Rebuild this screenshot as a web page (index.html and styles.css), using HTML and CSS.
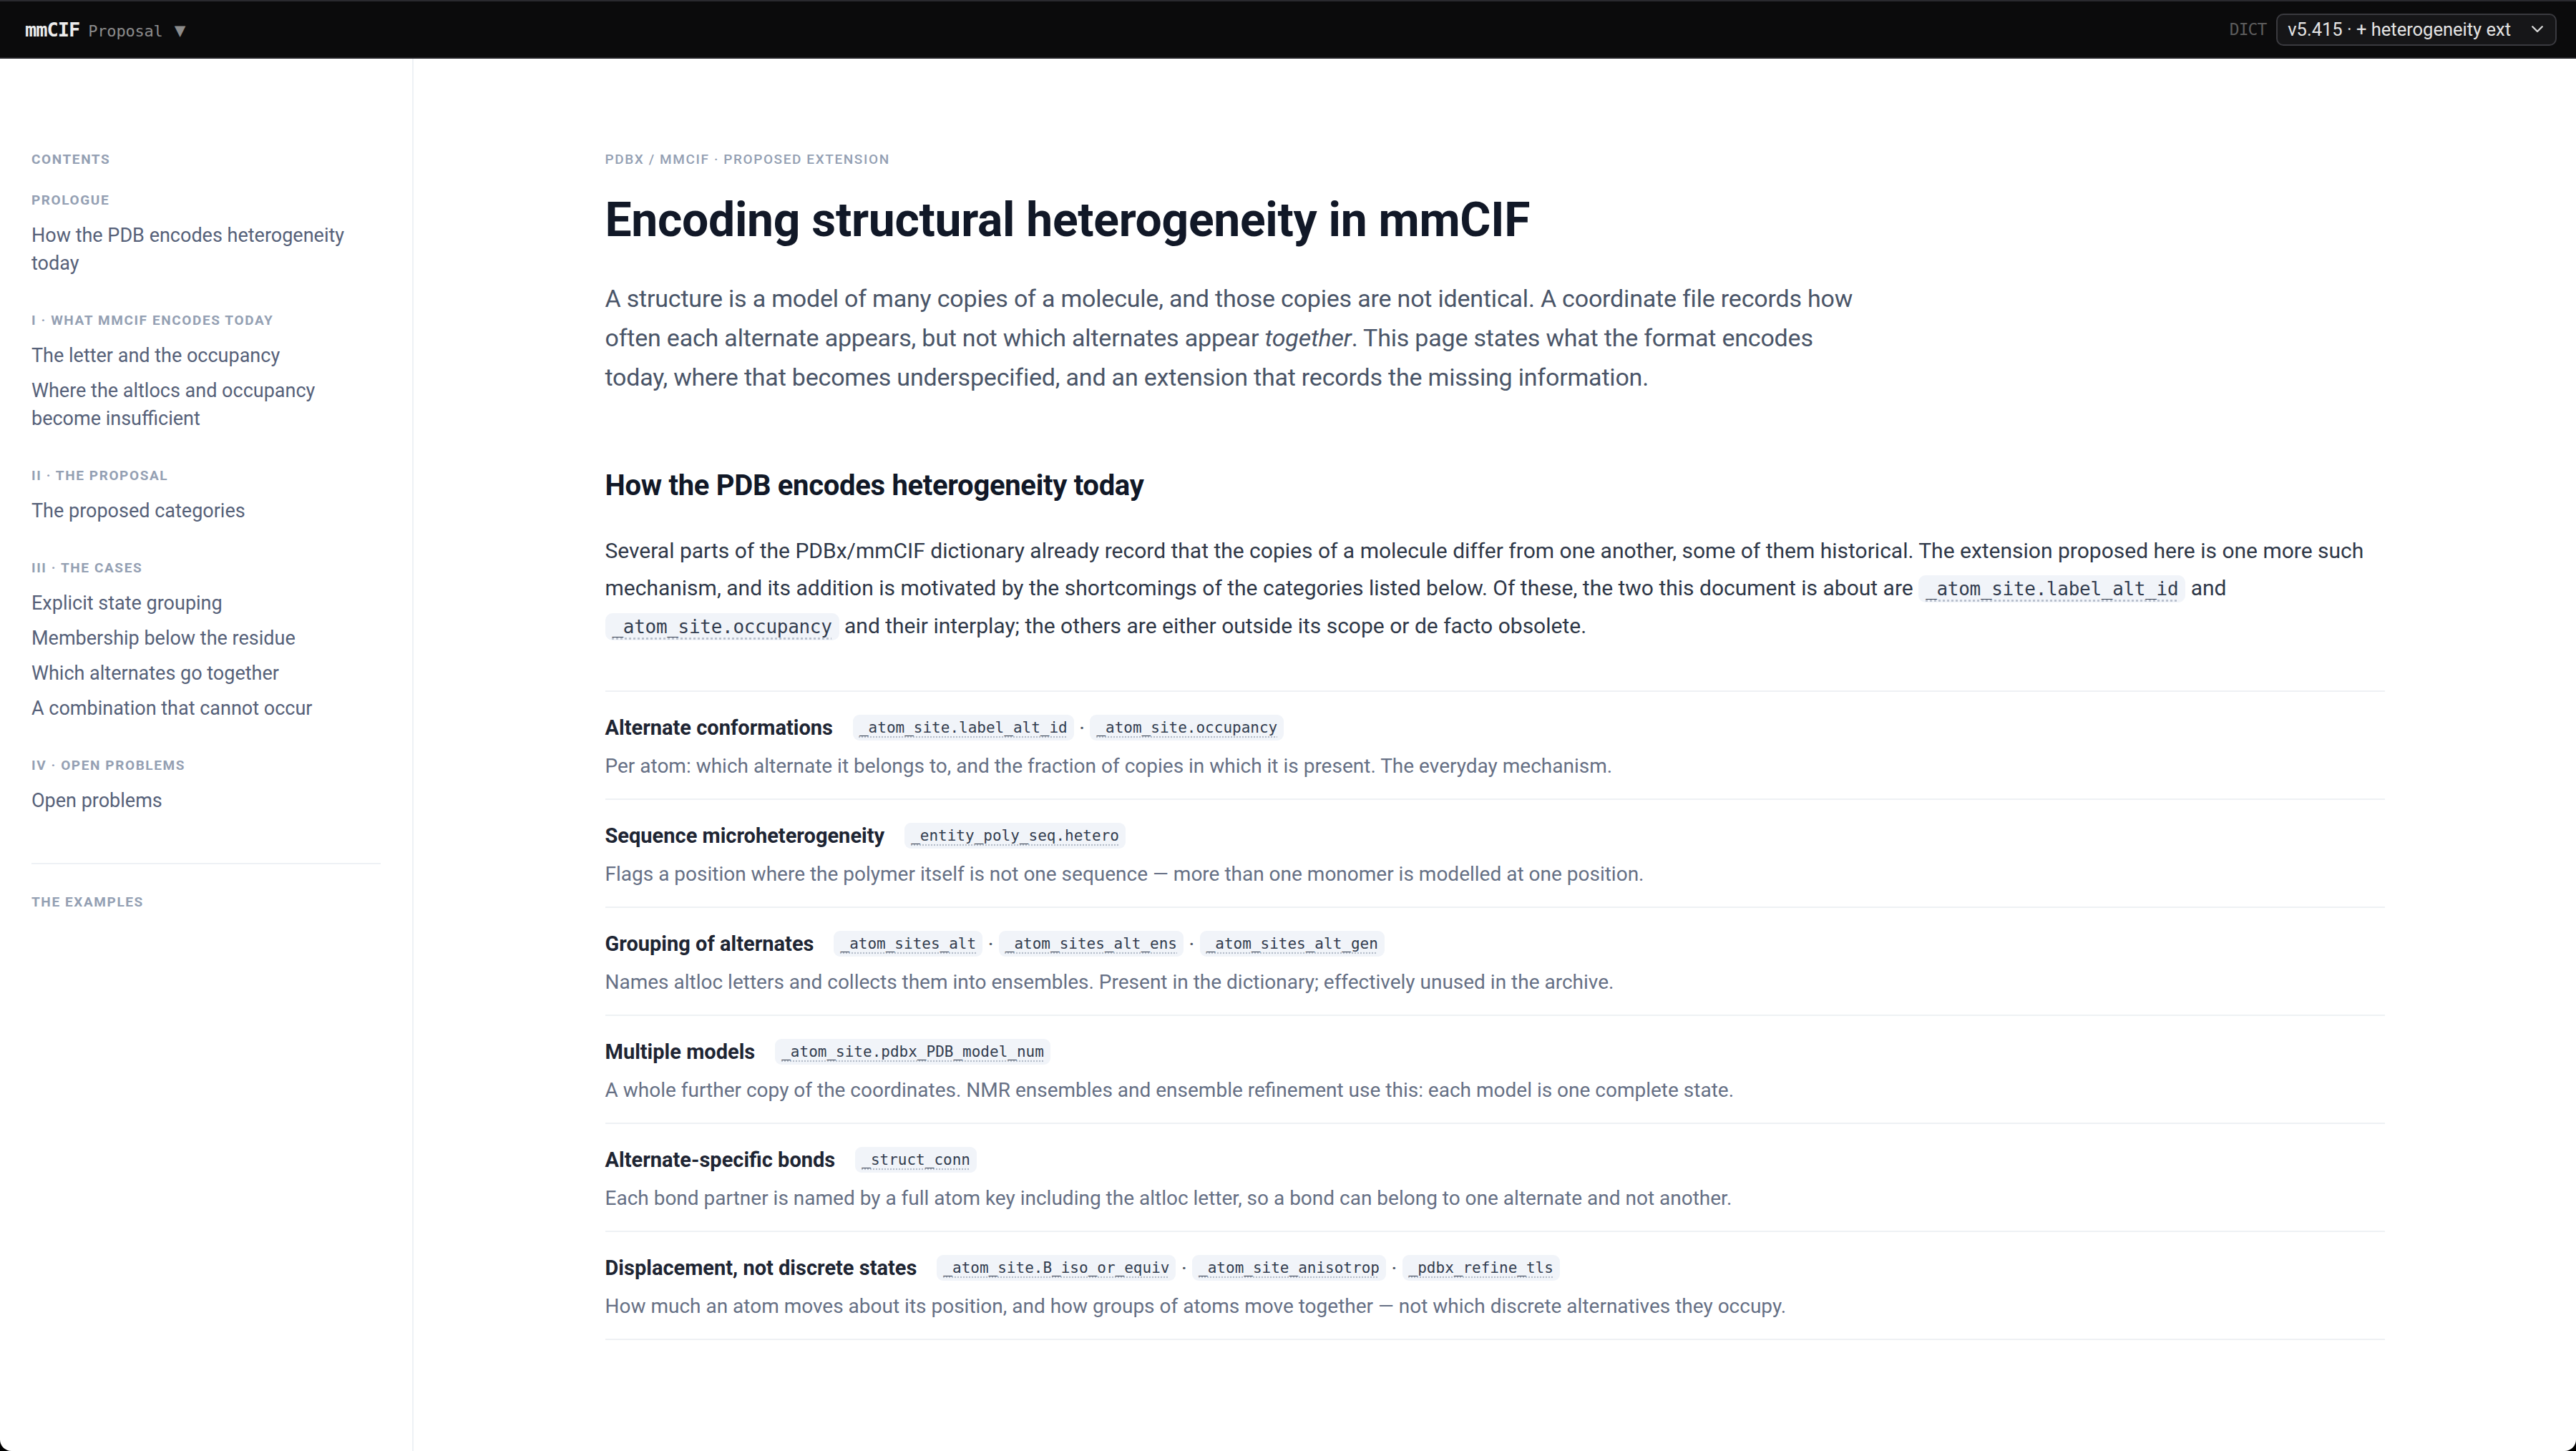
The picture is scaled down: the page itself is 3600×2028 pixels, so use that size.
FILE: index.html
```html
<!DOCTYPE html>
<html lang="en">
<head>
    <meta charset="UTF-8">
    <meta name="viewport" content="width=device-width, initial-scale=1.0">
    <title>mmCIF Proposal · Encoding structural heterogeneity</title>
    <link rel="stylesheet" href="styles.css">
</head>
<body>
    <div class="app">
        <header class="topbar">
            <div class="brand">
                <span class="brand-name">mmCIF</span>
                <span class="brand-sub">Proposal</span>
                <span class="brand-caret">▼</span>
            </div>
            <div class="dict">
                <span class="dict-label">DICT</span>
                <div class="dict-select">
                    <span>v5.415 · + heterogeneity ext</span>
                    <svg class="chevron" viewBox="0 0 12 8" width="18" height="12"><path d="M1.5 1.5 6 6l4.5-4.5" fill="none" stroke="#d8d8d8" stroke-width="1.6" stroke-linecap="round" stroke-linejoin="round"/></svg>
                </div>
            </div>
        </header>

        <div class="layout">
            <nav class="sidebar">
                <div class="toc-title">Contents</div>

                <div class="toc-group">
                    <div class="toc-label">Prologue</div>
                    <a class="toc-link" href="#today">How the PDB encodes heterogeneity today</a>
                </div>

                <div class="toc-group">
                    <div class="toc-label">I · What mmCIF encodes today</div>
                    <a class="toc-link" href="#">The letter and the occupancy</a>
                    <a class="toc-link" href="#">Where the altlocs and occupancy become insufficient</a>
                </div>

                <div class="toc-group">
                    <div class="toc-label">II · The proposal</div>
                    <a class="toc-link" href="#">The proposed categories</a>
                </div>

                <div class="toc-group">
                    <div class="toc-label">III · The cases</div>
                    <a class="toc-link" href="#">Explicit state grouping</a>
                    <a class="toc-link" href="#">Membership below the residue</a>
                    <a class="toc-link" href="#">Which alternates go together</a>
                    <a class="toc-link" href="#">A combination that cannot occur</a>
                </div>

                <div class="toc-group">
                    <div class="toc-label">IV · Open problems</div>
                    <a class="toc-link" href="#">Open problems</a>
                </div>

                <hr class="toc-divider">
                <div class="toc-label">The examples</div>
            </nav>

            <main class="main">
                <div class="content">
                    <div class="breadcrumb">PDBx / mmCIF · Proposed extension</div>
                    <h1>Encoding structural heterogeneity in mmCIF</h1>
                    <p class="intro">A structure is a model of many copies of a molecule, and those copies are not identical. A coordinate file records how often each alternate appears, but not which alternates appear <em>together</em>. This page states what the format encodes today, where that becomes underspecified, and an extension that records the missing information.</p>

                    <h2 id="today">How the PDB encodes heterogeneity today</h2>
                    <p class="body-text">Several parts of the PDBx/mmCIF dictionary already record that the copies of a molecule differ from one another, some of them historical. The extension proposed here is one more such mechanism, and its addition is motivated by the shortcomings of the categories listed below. Of these, the two this document is about are <code>_atom_site.label_alt_id</code> and <code>_atom_site.occupancy</code> and their interplay; the others are either outside its scope or de facto obsolete.</p>

                    <div class="mechanisms">
                        <div class="mech">
                            <div class="mech-head">
                                <span class="mech-name">Alternate conformations</span>
                                <span class="tags"><code>_atom_site.label_alt_id</code><span class="sep">·</span><code>_atom_site.occupancy</code></span>
                            </div>
                            <p class="mech-desc">Per atom: which alternate it belongs to, and the fraction of copies in which it is present. The everyday mechanism.</p>
                        </div>
                        <div class="mech">
                            <div class="mech-head">
                                <span class="mech-name">Sequence microheterogeneity</span>
                                <span class="tags"><code>_entity_poly_seq.hetero</code></span>
                            </div>
                            <p class="mech-desc">Flags a position where the polymer itself is not one sequence — more than one monomer is modelled at one position.</p>
                        </div>
                        <div class="mech">
                            <div class="mech-head">
                                <span class="mech-name">Grouping of alternates</span>
                                <span class="tags"><code>_atom_sites_alt</code><span class="sep">·</span><code>_atom_sites_alt_ens</code><span class="sep">·</span><code>_atom_sites_alt_gen</code></span>
                            </div>
                            <p class="mech-desc">Names altloc letters and collects them into ensembles. Present in the dictionary; effectively unused in the archive.</p>
                        </div>
                        <div class="mech">
                            <div class="mech-head">
                                <span class="mech-name">Multiple models</span>
                                <span class="tags"><code>_atom_site.pdbx_PDB_model_num</code></span>
                            </div>
                            <p class="mech-desc">A whole further copy of the coordinates. NMR ensembles and ensemble refinement use this: each model is one complete state.</p>
                        </div>
                        <div class="mech">
                            <div class="mech-head">
                                <span class="mech-name">Alternate-specific bonds</span>
                                <span class="tags"><code>_struct_conn</code></span>
                            </div>
                            <p class="mech-desc">Each bond partner is named by a full atom key including the altloc letter, so a bond can belong to one alternate and not another.</p>
                        </div>
                        <div class="mech">
                            <div class="mech-head">
                                <span class="mech-name">Displacement, not discrete states</span>
                                <span class="tags"><code>_atom_site.B_iso_or_equiv</code><span class="sep">·</span><code>_atom_site_anisotrop</code><span class="sep">·</span><code>_pdbx_refine_tls</code></span>
                            </div>
                            <p class="mech-desc">How much an atom moves about its position, and how groups of atoms move together — not which discrete alternatives they occupy.</p>
                        </div>
                    </div>
                </div>
            </main>
        </div>
    </div>
</body>
</html>
```

FILE: styles.css
```css
* {
    margin: 0;
    padding: 0;
    box-sizing: border-box;
}

html, body {
    height: 100%;
}

body {
    background: #000;
    font-family: 'Roboto', 'Inter', sans-serif;
    overflow: hidden;
}

.app {
    height: 100vh;
    display: flex;
    flex-direction: column;
    background: #fff;
    border-radius: 0 0 16px 16px;
    overflow: hidden;
}

/* top bar */
.topbar {
    height: 82px;
    flex: none;
    display: flex;
    align-items: center;
    justify-content: space-between;
    padding: 0 27px 0 35px;
    background: #0b0b0c;
    border-top: 2px solid #2a2a2f;
    border-bottom: 2px solid #232327;
}

.brand {
    display: flex;
    align-items: baseline;
    gap: 12px;
    font-family: 'DejaVu Sans Mono', 'Liberation Mono', monospace;
}

.brand-name {
    color: #ececec;
    font-size: 27px;
    font-weight: bold;
    letter-spacing: -1px;
}

.brand-sub {
    color: #8c8c8c;
    font-size: 22px;
    letter-spacing: -0.2px;
}

.brand-caret {
    color: #8c8c8c;
    font-size: 26px;
    margin-left: 4px;
}

.dict {
    display: flex;
    align-items: center;
    gap: 14px;
}

.dict-label {
    font-family: 'DejaVu Sans Mono', 'Liberation Mono', monospace;
    font-size: 23px;
    letter-spacing: -1px;
    color: #5c5c5c;
}

.dict-select {
    height: 45px;
    display: flex;
    align-items: center;
    gap: 28px;
    padding: 0 16px 0 14px;
    background: #161618;
    border: 2px solid #3a3a3f;
    border-radius: 10px;
    color: #e4e4e4;
    font-size: 25.5px;
}

/* layout */
.layout {
    flex: 1;
    display: flex;
    min-height: 0;
}

.sidebar {
    width: 578px;
    flex: none;
    padding: 126px 44px;
    border-right: 2px solid #eef1f5;
}

.toc-title,
.toc-label {
    font-size: 19px;
    line-height: 30px;
    font-weight: 700;
    letter-spacing: 1.6px;
    text-transform: uppercase;
    color: #94a0b3;
}

.toc-title {
    margin-bottom: 27px;
}

.toc-group {
    margin-bottom: 40px;
}

.toc-group .toc-label {
    margin-bottom: 10px;
}

.toc-link {
    display: block;
    padding: 5px 0;
    font-size: 27px;
    line-height: 39px;
    color: #566179;
    text-decoration: none;
}

.toc-divider {
    border: none;
    border-top: 2px solid #eef1f5;
    margin: 62px 0 38px;
}

/* main column */
.main {
    flex: 1;
    padding-top: 126px;
}

.content {
    max-width: 2487px;
    margin: 0 auto;
}

.breadcrumb {
    font-size: 19px;
    line-height: 30px;
    font-weight: 500;
    letter-spacing: 1.6px;
    text-transform: uppercase;
    color: #94a0b3;
    margin-bottom: 29px;
}

h1 {
    font-size: 66px;
    line-height: 82px;
    font-weight: 700;
    letter-spacing: -0.3px;
    color: #111827;
}

.intro {
    max-width: 1780px;
    margin-top: 41px;
    font-size: 34px;
    line-height: 55px;
    letter-spacing: -0.2px;
    color: #4a5568;
}

h2 {
    margin-top: 98px;
    font-size: 40px;
    line-height: 52px;
    font-weight: 700;
    letter-spacing: -0.3px;
    color: #111827;
}

.body-text {
    margin-top: 39px;
    font-size: 30px;
    line-height: 52px;
    color: #2f3848;
}

code {
    font-family: 'DejaVu Sans Mono', 'Liberation Mono', monospace;
    font-size: 26px;
    letter-spacing: -0.3px;
    color: #333d4f;
    background: #f1f4f9;
    border-radius: 10px;
    padding: 4px 10px;
    text-decoration: underline dotted #b4bcc9;
    text-underline-offset: 6px;
}

/* mechanisms list */
.mechanisms {
    margin-top: 63px;
    border-bottom: 2px solid #eef1f4;
}

.mech {
    border-top: 2px solid #eef1f4;
    padding: 28px 0 22px;
}

.mech-head {
    height: 44px;
    display: flex;
    align-items: center;
    gap: 28px;
}

.mech-name {
    font-size: 29px;
    font-weight: 700;
    color: #1e2533;
}

.tags {
    display: flex;
    align-items: center;
}

.tags code {
    font-size: 21px;
    letter-spacing: 0;
    padding: 6px 9px;
    border-radius: 9px;
    text-underline-offset: 5px;
}

.sep {
    color: #4b5563;
    font-size: 22px;
    font-weight: 700;
    margin: 0 8px;
}

.mech-desc {
    margin-top: 9px;
    font-size: 28px;
    line-height: 46px;
    color: #667085;
}
```
